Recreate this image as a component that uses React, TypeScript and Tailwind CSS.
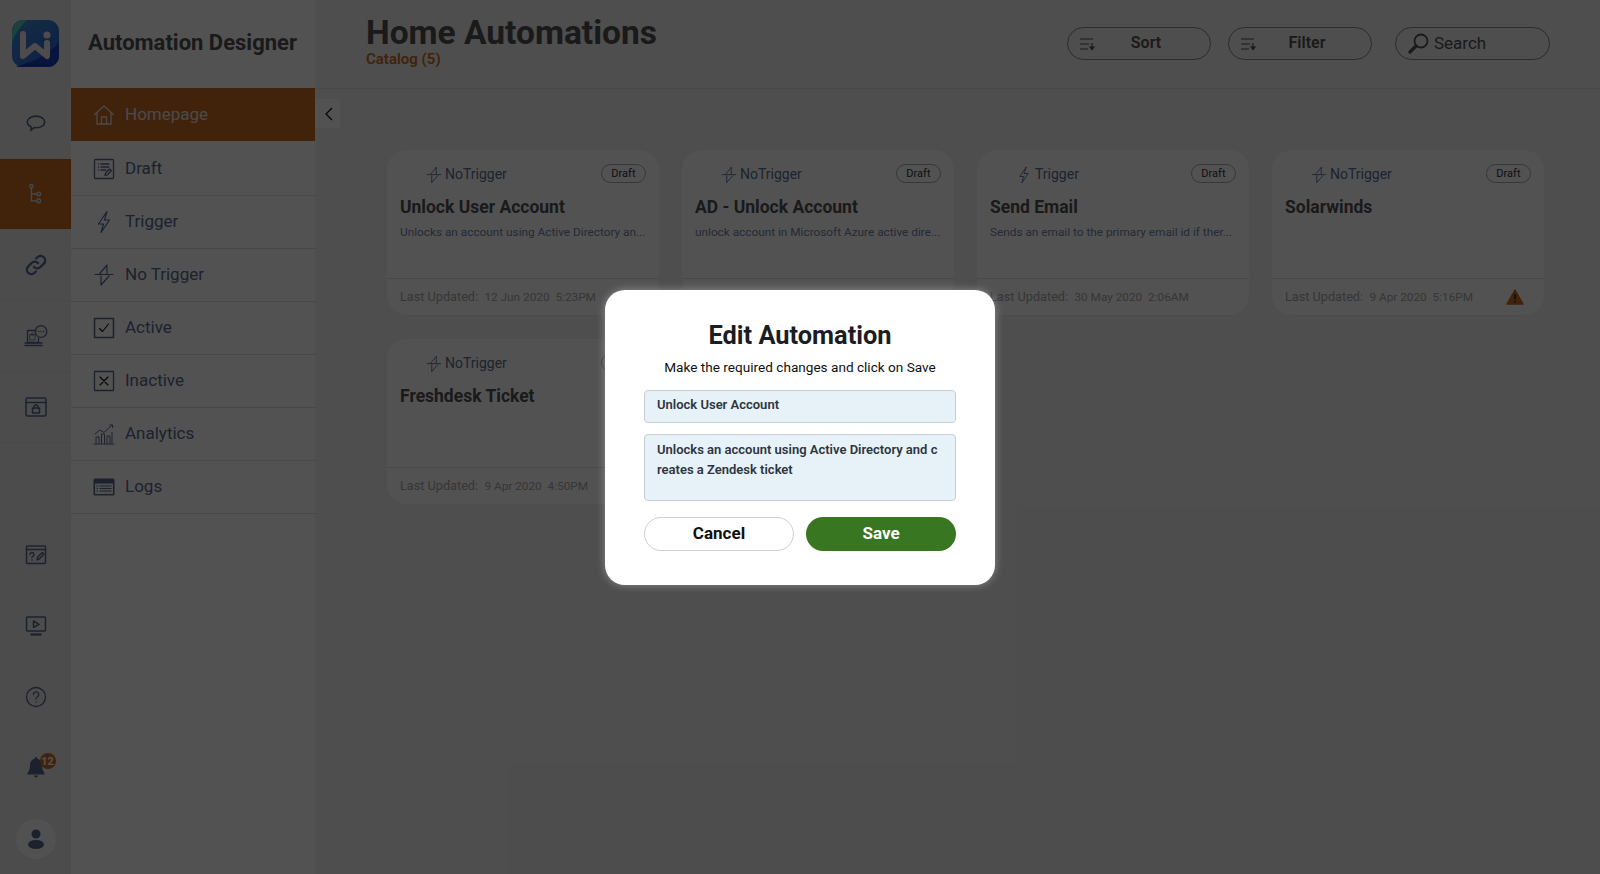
import React from "react";

const S = ({ size = 20, children, sw = 1.5, vb = 24 }: any) => (
  <svg width={size} height={size} viewBox={`0 0 ${vb} ${vb}`} fill="none" stroke="currentColor" strokeWidth={sw} strokeLinecap="round" strokeLinejoin="round">
    {children}
  </svg>
);

const Bolt = ({ size = 20 }: any) => (
  <S size={size} sw={1.2}><path d="M15 1.500 6.500 14h5L9 22.500 17.500 10h-5z" /></S>
);
const NoBolt = ({ size = 20 }: any) => (
  <S size={size} sw={1.2}><path d="M15 2 7 11.500M15 2v9.500M3 11.500h18M9 22v-9M9 22l8-9" /></S>
);
const Logo = () => (
  <svg width="47" height="47" viewBox="0 0 47 47">
    <defs>
      <linearGradient id="lg" x1="0" y1="0" x2="1" y2="1">
        <stop offset="0" stopColor="#3f8fd8" />
        <stop offset="1" stopColor="#2a5fd0" />
      </linearGradient>
    </defs>
    <rect width="47" height="47" rx="11" fill="url(#lg)" />
    <path d="M0 14C0 5 5 0 14 0h1C10 5 5 10 0 22z" fill="#56d1b8" />
    <path d="M4 47C15 42 32 40 47 22v14c0 6-5 11-11 11z" fill="#1c3fc0" />
    <path d="M11 14v22l12-10 12 10V23" fill="none" stroke="#f4e9f0" strokeWidth="6" strokeLinejoin="round" strokeLinecap="round" />
    <circle cx="35" cy="15" r="3.600" fill="#f4e9f0" />
  </svg>
);

const railTop = [
  <S size={22} sw={1.800}><path d="M12 4.500c5.500 0 9.500 2.800 9.500 6.400s-4 6.300-9.500 6.300c-.8 0-1.500 0-2.200-.1L6.500 20l.2-3.800c-2.600-1.100-4.200-3-4.200-5.300 0-3.600 4-6.400 9.500-6.400z" /></S>,
  <S size={22} sw={1.500}><path d="M7 5.500v14h6M7 12h6" /><circle cx="7" cy="3.500" r="1.800" /><circle cx="15" cy="12" r="2" /><circle cx="15" cy="19.500" r="2" /></S>,
  <S size={24} sw={2.300}><path d="M10 14a4.500 4.500 0 0 0 6.400 0l3.400-3.400a4.500 4.500 0 0 0-6.400-6.400l-1.300 1.300" /><path d="M14 10a4.500 4.500 0 0 0-6.400 0l-3.400 3.400a4.500 4.500 0 0 0 6.400 6.400l1.300-1.300" /></S>,
  <S size={24} sw={1.300}><path d="M12 6.500H3.500v12h11v-4" /><path d="M1 19h17M1 21.500h17" /><rect x="6" y="10.500" width="5" height="5.500" strokeWidth="0.800" /><circle cx="8.500" cy="10.500" r="1.200" strokeWidth="0.800" /><circle cx="17" cy="7.500" r="5.800" /><path d="M14.500 7.500h.2M17 7.500h.2M19.500 7.500h.2" /></S>,
  <S size={24} sw={1.500}><rect x="2" y="3" width="20" height="18" rx="1.500" /><path d="M2 7.500h20" /><rect x="8.500" y="13" width="7" height="5" /><path d="M10 13v-1a2 2 0 0 1 4 0v1" /></S>,
];

const railBottom = [
  <S size={24} sw={1.500}><rect x="2.500" y="3" width="19" height="17.500" rx="1" /><path d="M2.500 6.500h19" /><path d="M6 11.500a2 2 0 1 1 2.600 1.900c-.5.200-.6.600-.6 1.100M8 17h.1M13 17l.6-2.800 3.800-4a1.200 1.200 0 0 1 1.800 1.600l-3.700 4z" /></S>,
  <S size={24} sw={1.500}><rect x="2.500" y="3" width="19" height="14" rx="1" /><path d="M9.500 7v6.500l5.500-3.200zM7 20.500h10" /><path d="M7.500 20.500h9" strokeWidth="2" /></S>,
  <S size={24} sw={1.300}><circle cx="12" cy="12" r="9.500" /><path d="M9.500 9.500a2.600 2.600 0 1 1 3.900 2.200c-.9.500-1.400 1.200-1.400 2.300M12 17h.1" /></S>,
];

const nav: [string, React.ReactNode][] = [
  ["Draft", <S size={24} sw={1.300}><rect x="2.500" y="2.500" width="19" height="19" rx="1" /><path d="M6.500 7h.1M9 7h8M6.500 10h.1M9 10h8M6.500 13h.1M9 13h5M13 18.500l.6-2.500 4-4 1.800 1.800-4 4z" /></S>],
  ["Trigger", <Bolt size={24} />],
  ["No Trigger", <NoBolt size={24} />],
  ["Active", <S size={24} sw={1.100}><rect x="2.500" y="2.500" width="19" height="19" strokeWidth="1.500" /><path d="m7.500 12.500 3 3 6-7.500" stroke="#111" /></S>],
  ["Inactive", <S size={24} sw={1.100}><rect x="2.500" y="2.500" width="19" height="19" strokeWidth="1.300" /><path d="m8 8 8 8M16 8l-8 8" stroke="#111" /></S>],
  ["Analytics", <S size={24} sw={1}><path d="M2 22h20M4 21v-6h3v6M9.500 21v-9h3v9M15 21v-7h3v7M20 21V10.500M3 12l5-4 4 2.500L20 3M18 3h2.500v2.500" /></S>],
  ["Logs", <svg width="24" height="24" viewBox="0 0 24 24"><rect x="1.500" y="3.500" width="21" height="17" rx="1.500" fill="currentColor" /><rect x="3" y="8.500" width="18" height="10.500" fill="#f4f4f4" /><path d="M4.500 11h1.500M7.500 11H19.500M4.500 13.500h1.500M7.500 13.500H19.500M4.500 16h1.500M7.500 16H19.500" stroke="currentColor" strokeWidth="1" /></svg>],
];

const SortIcon = () => (
  <svg width="16" height="14" viewBox="0 0 16 14" fill="none" stroke="#525252" strokeWidth="1.200">
    <path d="M1 2h13M1 7h9M1 12h8M13 6v6" />
    <path d="m11 10 2 2.500 2-2.500z" fill="#525252" />
  </svg>
);

const cards = [
  { kind: "NoTrigger", title: "Unlock User Account", desc: "Unlocks an account using Active Directory an...", date: "12 Jun 2020", time: "5:23PM" },
  { kind: "NoTrigger", title: "AD - Unlock Account", desc: "unlock account in Microsoft Azure active dire...", date: "20 May 2020", time: "3:14AM" },
  { kind: "Trigger", title: "Send Email", desc: "Sends an email to the primary email id if ther...", date: "30 May 2020", time: "2:06AM" },
  { kind: "NoTrigger", title: "Solarwinds", desc: "", date: "9 Apr 2020", time: "5:16PM", warn: true },
  { kind: "NoTrigger", title: "Freshdesk Ticket", desc: "", date: "9 Apr 2020", time: "4:50PM" },
];

function Card({ c }: { c: (typeof cards)[number] }) {
  return (
    <div className="flex h-[165px] flex-col rounded-[20px] bg-white">
      <div className="flex flex-1 flex-col px-[13px] pt-[14px]">
        <div className="flex h-[19px] items-center justify-between">
          <div className="flex items-center gap-[2px] pt-[2px] pl-[25px] text-[14px] text-[#5a6e94]">
            {c.kind === "Trigger" ? <Bolt size={18} /> : <NoBolt size={18} />}
            <span>{c.kind}</span>
          </div>
          <span className="rounded-full border border-[#aaa] px-[9.500px] py-[1px] text-[11px] leading-[15px] text-[#333]">Draft</span>
        </div>
        <div className="mt-[12px] text-[17.500px] leading-[24px] font-bold text-[#525252]">{c.title}</div>
        <div className="mt-[5px] text-[11.800px] leading-[16px] whitespace-nowrap text-[#6f84ad]">{c.desc}</div>
      </div>
      <div className="flex h-[37px] shrink-0 items-center justify-between border-t border-[#e0e0e0] pr-[20px] pl-[13px] text-[12.700px] text-[#a8a8a8]">
        <span className="whitespace-pre">Last Updated:  <span className="text-[11.800px]">{`${c.date}  ${c.time}`}</span></span>
        {c.warn && (
          <svg width="18" height="16" viewBox="0 0 18 16">
            <path d="M9 1 17 15H1z" fill="#c96a24" stroke="#c96a24" strokeWidth="1.500" strokeLinejoin="round" />
            <path d="M9 5v5.500M9 12v1.500" stroke="#222" strokeWidth="1.500" />
          </svg>
        )}
      </div>
    </div>
  );
}

export default function App() {
  return (
    <div className="relative flex h-[874px] w-[1600px] overflow-hidden bg-[#f1f1f1] font-['Roboto',sans-serif]">
      {/* rail */}
      <div className="flex w-[71px] shrink-0 flex-col justify-between bg-[#ebebeb] text-[#566a90]">
        <div>
          <div className="flex h-[88px] items-start justify-center pt-[20px]"><Logo /></div>
          {railTop.map((ic, i) => (
            <div key={i} className={`flex h-[71px] items-center justify-center border-b border-[#e2e2e2] ${i === 1 ? "bg-[#c96a24] text-[#dddddd]" : ""}`}>{ic}</div>
          ))}
        </div>
        <div>
          {railBottom.map((ic, i) => (
            <div key={i} className="flex h-[71px] items-center justify-center">{ic}</div>
          ))}
          <div className="flex h-[71px] items-center justify-center">
            <div className="relative">
              <svg width="18" height="21" viewBox="0 0 18 21" fill="currentColor"><path d="M9 0a1.600 1.600 0 0 1 1.500 1.700C13.500 2.500 15 5 15 8c0 4 1 6 2.500 8v1.500h-17V16C2 14 3 12 3 8c0-3 1.500-5.500 4.500-6.300A1.600 1.600 0 0 1 9 0z" /><path d="M7 18.500h4a2 2 0 0 1-4 0z" /></svg>
              <span className="absolute -top-[4px] -right-[11px] flex h-4 w-4 items-center justify-center rounded-full bg-[#c96a24] text-[11px] leading-none font-bold text-white">12</span>
            </div>
          </div>
          <div className="flex h-[71px] items-center justify-center">
            <div className="flex h-10 w-10 items-center justify-center rounded-full bg-[#fafafa]">
              <svg width="16" height="20" viewBox="0 0 16 20" fill="currentColor"><circle cx="8" cy="5" r="4.500" /><ellipse cx="8" cy="15.500" rx="8" ry="4.500" /></svg>
            </div>
          </div>
        </div>
      </div>

      {/* nav */}
      <div className="flex w-[244px] shrink-0 flex-col bg-white">
        <div className="flex h-[88px] items-center pb-[3px] pl-[17px] text-[22px] font-bold whitespace-nowrap text-[#525252]">Automation Designer</div>
        <div className="flex h-[53px] items-center gap-[9px] bg-[#c96a24] pl-[21px] text-[17px] text-[#e6e6e6]">
          <S size={24} sw={1.300}><path d="M2.500 11.500 12 3l9.500 8.500M5 9.500V21h14V9.500M9.500 21v-7h5v7" /></S>
          <span>Homepage</span>
        </div>
        <div className="mt-[1.500px]">
          {nav.map(([label, icon]) => (
            <div key={label} className="flex h-[53px] items-center gap-[9px] border-b border-[#dedede] pl-[21px] text-[17px] text-[#566a90]">
              {icon}
              <span>{label}</span>
            </div>
          ))}
        </div>
      </div>

      {/* main */}
      <div className="flex min-w-0 flex-1 flex-col">
        <div className="flex h-[89px] shrink-0 items-start border-b border-[#e6e6e6] pl-[51px]">
          <div className="w-[701px] pt-[14px]">
            <div className="text-[33.500px] leading-[37px] font-bold whitespace-nowrap text-[#525252]">Home Automations</div>
            <div className="text-[15px] leading-[16px] font-semibold text-[#c96a24]">Catalog (5)</div>
          </div>
          <div className="flex pt-[27px]">
            <div className="relative flex h-[33px] w-[144px] items-center justify-center rounded-full border border-[#888] pb-[2px] pl-[14px] text-[16px] font-semibold text-[#525252]">
              <span className="absolute top-[9px] left-[11px]"><SortIcon /></span>Sort
            </div>
            <div className="relative ml-[17px] flex h-[33px] w-[144px] items-center justify-center rounded-full border border-[#888] pb-[2px] pl-[14px] text-[16px] font-semibold text-[#525252]">
              <span className="absolute top-[9px] left-[11px]"><SortIcon /></span>Filter
            </div>
            <div className="ml-[23px] flex h-[33px] w-[155px] items-center gap-[5px] rounded-full border border-[#888] pl-[12px] text-[17px] text-[#525252]">
              <svg width="21" height="21" viewBox="0 0 21 21" fill="none" stroke="#525252"><circle cx="13" cy="8" r="6.500" strokeWidth="1.800" /><path d="m8 13-6 6" strokeWidth="3.200" strokeLinecap="round" /></svg>
              Search
            </div>
          </div>
        </div>
        <div className="flex flex-1 items-start">
          <div className="mt-[10px] flex h-[29px] w-[25px] shrink-0 items-center justify-center bg-white pl-[3px]">
            <svg width="12" height="16" viewBox="0 0 12 16" fill="none" stroke="#111" strokeWidth="1.300"><path d="M9 2 3 8l6 6" /></svg>
          </div>
          <div className="mt-[61px] ml-[47px] grid grid-cols-[repeat(4,272px)] gap-x-[23px] gap-y-[24px]">
            {cards.map((c) => <Card key={c.title} c={c} />)}
          </div>
        </div>
      </div>

      {/* modal */}
      <div className="absolute inset-0 flex items-center justify-center bg-black/68">
        <div className="flex h-[295px] w-[390px] flex-col items-center rounded-[20px] bg-white px-[39px] pt-[28px] shadow-[0_0_8px_rgba(255,255,255,0.35)]">
          <div className="text-[25.400px] leading-[35px] font-bold text-[#1a1d22]">Edit Automation</div>
          <div className="mt-[4px] text-[13.600px] leading-[20px] text-[#111]">Make the required changes and click on Save</div>
          <div className="mt-[13px] h-[33px] w-full rounded-[4px] border border-[#c9ced3] bg-[#e7f2f8] px-[12px] text-[13px] leading-[28px] font-semibold text-[#2d3540]">Unlock User Account</div>
          <div className="mt-[11px] h-[67px] w-full rounded-[4px] border border-[#c9ced3] bg-[#e7f2f8] py-[5px] pr-[15px] pl-[12px] text-[13px] leading-[20px] font-semibold break-all text-[#2d3540]">Unlocks an account using Active Directory and creates a Zendesk ticket</div>
          <div className="mt-[16px] flex w-full justify-between">
            <div className="flex h-[34px] w-[150px] items-center justify-center rounded-full border border-[#cfcfcf] bg-white pt-[1px] text-[17px] font-bold text-[#111]">Cancel</div>
            <div className="flex h-[34px] w-[150px] items-center justify-center rounded-full bg-[#387621] pt-[1px] text-[17px] font-bold text-white">Save</div>
          </div>
        </div>
      </div>
    </div>
  );
}
